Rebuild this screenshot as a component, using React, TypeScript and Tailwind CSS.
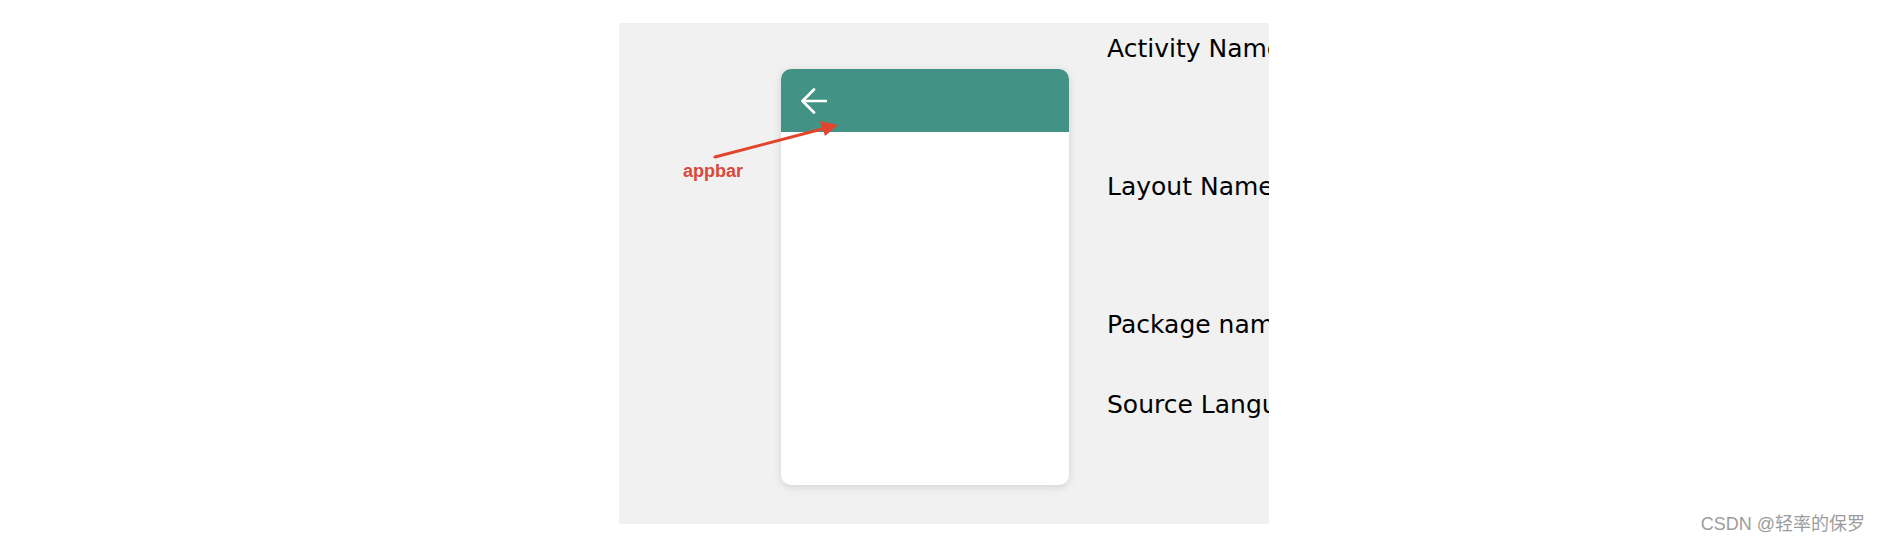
import { ReactNode } from "react";

const Label = ({ children, className }: { children: ReactNode; className: string }) => (
  <p
    className={`h-[28px] leading-[28px] text-[25px] text-black whitespace-nowrap ${className}`}
    style={{ fontFamily: '"DejaVu Sans", Verdana, sans-serif' }}
  >
    {children}
  </p>
);

export const App = () => {
  return (
    <div className="relative w-full h-[544px] bg-white overflow-hidden">
      <div className="ml-[619px] pt-[23px]">
        <div className="flex w-[650px] h-[501px] bg-[#f1f1f1] overflow-hidden">
          <div className="pl-[162px] pt-[46px] shrink-0">
            <div className="w-[288px] h-[416px] rounded-[10px] bg-white shadow-[0_2px_8px_rgba(0,0,0,0.13)] overflow-hidden">
              <div className="h-[63px] bg-[#429386] flex items-center pl-[20px]">
                <svg width="26" height="26" viewBox="0 0 26 26" fill="none">
                  <path
                    d="M1.5 13H25M13 1.5L1.5 13L13 24.5"
                    stroke="#ffffff"
                    strokeWidth="2.7"
                    strokeLinecap="round"
                    strokeLinejoin="round"
                  />
                </svg>
              </div>
            </div>
          </div>
          <div className="ml-[38px] pt-[12px] shrink-0">
            <Label className="">Activity Name</Label>
            <Label className="mt-[110px]">Layout Name</Label>
            <Label className="mt-[110px]">Package name</Label>
            <Label className="mt-[52px]">Source Language</Label>
          </div>
        </div>
      </div>

      {/* annotation */}
      <svg
        className="absolute left-0 top-0 pointer-events-none"
        width="1884"
        height="544"
        viewBox="0 0 1884 544"
      >
        <line x1="715" y1="157" x2="824" y2="128.5" stroke="#e2452b" strokeWidth="3" strokeLinecap="round" />
        <polygon points="838,125 820,121 825,136" fill="#e2452b" />
      </svg>
      <span
        className="absolute left-[683px] top-[158px] text-[18px] font-bold text-[#d9493b]"
        style={{ fontFamily: '"Liberation Sans", Arial, sans-serif' }}
      >
        appbar
      </span>

      <span
        className="absolute right-[19px] top-[511px] text-[18px] text-[#9c9c9c] whitespace-nowrap"
        style={{ fontFamily: '"Liberation Sans", Arial, "Noto Sans CJK SC", sans-serif' }}
      >
        CSDN @轻率的保罗
      </span>
    </div>
  );
};

export default App;
